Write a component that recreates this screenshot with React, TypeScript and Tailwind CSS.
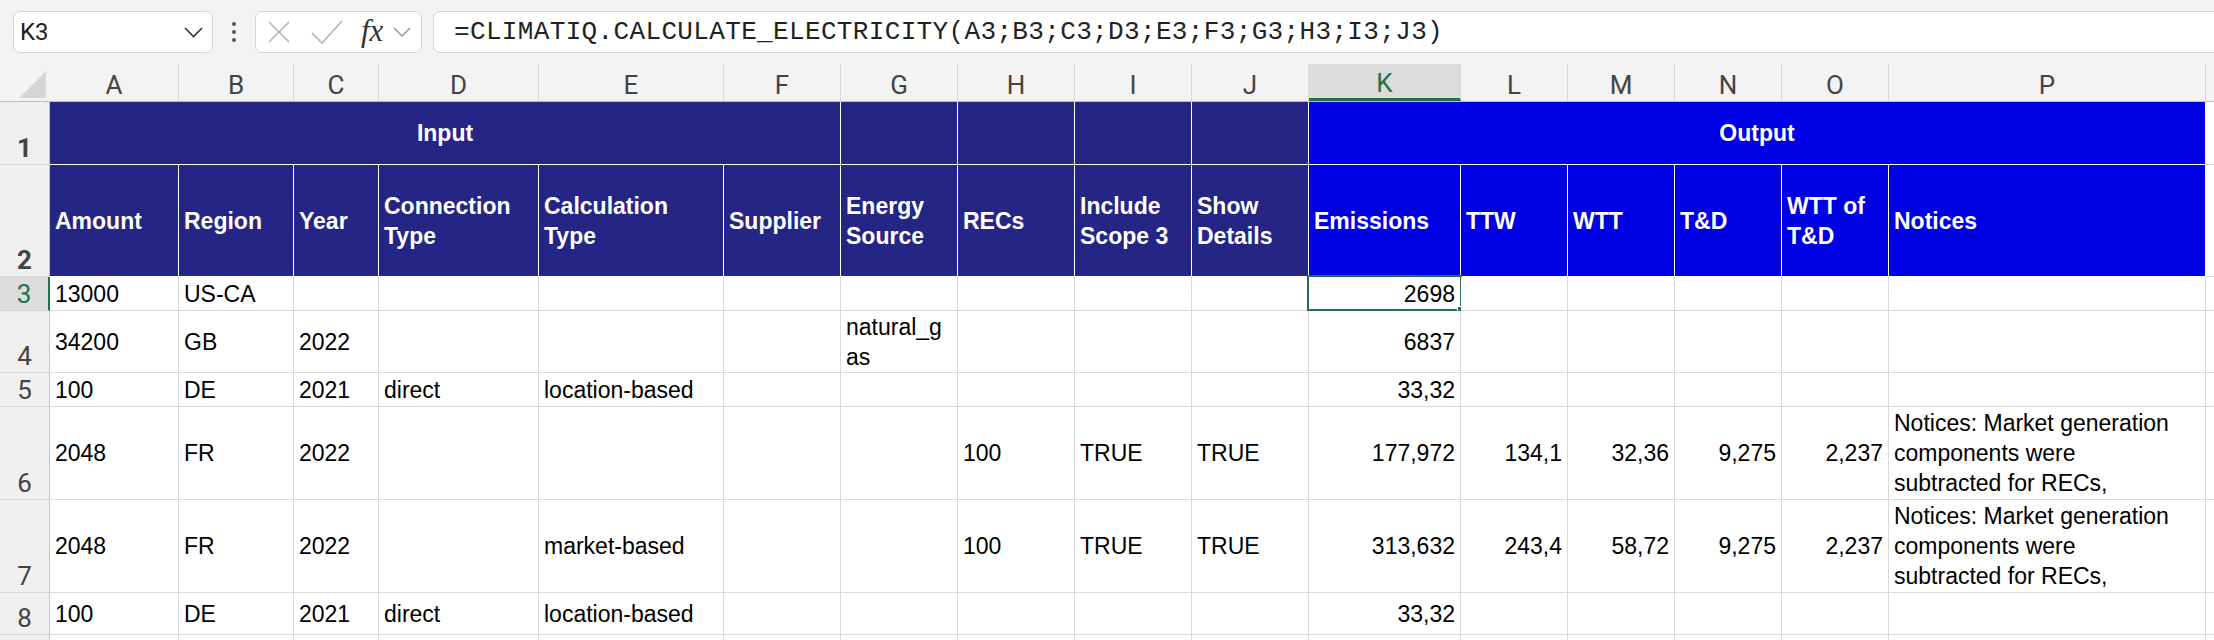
import React from "react";

const columns = [
  { letter: "A", w: "w-[129px]" },
  { letter: "B", w: "w-[115px]" },
  { letter: "C", w: "w-[85px]" },
  { letter: "D", w: "w-[160px]" },
  { letter: "E", w: "w-[185px]" },
  { letter: "F", w: "w-[117px]" },
  { letter: "G", w: "w-[117px]" },
  { letter: "H", w: "w-[117px]" },
  { letter: "I", w: "w-[117px]" },
  { letter: "J", w: "w-[117px]" },
  { letter: "K", w: "w-[152px]" },
  { letter: "L", w: "w-[107px]" },
  { letter: "M", w: "w-[107px]" },
  { letter: "N", w: "w-[107px]" },
  { letter: "O", w: "w-[107px]" },
  { letter: "P", w: "w-[317px]" },
];

const headers: string[][] = [
  ["Amount"],
  ["Region"],
  ["Year"],
  ["Connection", "Type"],
  ["Calculation", "Type"],
  ["Supplier"],
  ["Energy", "Source"],
  ["RECs"],
  ["Include", "Scope 3"],
  ["Show", "Details"],
  ["Emissions"],
  ["TTW"],
  ["WTT"],
  ["T&D"],
  ["WTT of", "T&D"],
  ["Notices"],
];

const notice = ["Notices: Market generation", "components were", "subtracted for RECs,"];

type Cell = string | string[] | null;

const rows: { n: number; h: string; cells: Cell[] }[] = [
  { n: 3, h: "h-[34px]", cells: ["13000", "US-CA", null, null, null, null, null, null, null, null, "2698", null, null, null, null, null] },
  { n: 4, h: "h-[62px]", cells: ["34200", "GB", "2022", null, null, null, ["natural_g", "as"], null, null, null, "6837", null, null, null, null, null] },
  { n: 5, h: "h-[34px]", cells: ["100", "DE", "2021", "direct", "location-based", null, null, null, null, null, "33,32", null, null, null, null, null] },
  { n: 6, h: "h-[93px]", cells: ["2048", "FR", "2022", null, null, null, null, "100", "TRUE", "TRUE", "177,972", "134,1", "32,36", "9,275", "2,237", notice] },
  { n: 7, h: "h-[93px]", cells: ["2048", "FR", "2022", null, "market-based", null, null, "100", "TRUE", "TRUE", "313,632", "243,4", "58,72", "9,275", "2,237", notice] },
  { n: 8, h: "h-[42px]", cells: ["100", "DE", "2021", "direct", "location-based", null, null, null, null, null, "33,32", null, null, null, null, null] },
  { n: 9, h: "h-[40px]", cells: [null, null, null, null, null, null, null, null, null, null, null, null, null, null, null, null] },
];

const RowHead = ({ n, active, hideLabel }: { n: number; active?: boolean; hideLabel?: boolean }) => (
  <div
    className={`w-[50px] h-full shrink-0 flex items-end justify-center pb-[3px] border-b border-[#d6d6d6] font-['Roboto'] text-[26px] leading-none ${
      active
        ? "bg-[#dcdcdc] text-[#217346] border-r-2 border-r-[#217346]"
        : "bg-[#f0f0f0] text-[#444] border-r border-r-[#c4c4c4]"
    }`}
  >
    {hideLabel ? null : n}
  </div>
);

const Lines = ({ value }: { value: Cell }) => {
  if (value === null) return null;
  const lines = Array.isArray(value) ? value : [value];
  return (
    <div>
      {lines.map((l) => (
        <div key={l} className="whitespace-nowrap">
          {l}
        </div>
      ))}
    </div>
  );
};

export default function App() {
  return (
    <div className="w-[2214px] h-[640px] overflow-hidden bg-[#f3f3f3] font-['Liberation_Sans',Arial,sans-serif]">
      {/* Formula bar */}
      <div className="h-[64px] flex items-start pt-[11px]">
        <div className="ml-[13px] w-[200px] h-[42px] shrink-0 bg-white border border-[#d4d4d4] rounded-[7px] flex items-center justify-between pl-[6px] pr-[9px]">
          <span className="font-['Roboto'] text-[24px] text-[#222]">K3</span>
          <svg width="19" height="11" viewBox="0 0 19 11">
            <polyline points="1,1 9.5,9.5 18,1" fill="none" stroke="#333" strokeWidth="1.6" />
          </svg>
        </div>
        <div className="w-[42px] h-[42px] shrink-0 flex items-center justify-center">
          <svg width="6" height="22" viewBox="0 0 6 22">
            <circle cx="3" cy="3" r="2" fill="#555" />
            <circle cx="3" cy="11" r="2" fill="#555" />
            <circle cx="3" cy="19" r="2" fill="#555" />
          </svg>
        </div>
        <div className="w-[167px] h-[42px] shrink-0 bg-white border border-[#d4d4d4] rounded-[7px] flex items-center pl-[11px]">
          <svg width="24" height="24" viewBox="0 0 24 24">
            <line x1="2" y1="2" x2="22" y2="22" stroke="#b3b3b3" strokeWidth="1.6" />
            <line x1="22" y1="2" x2="2" y2="22" stroke="#b3b3b3" strokeWidth="1.6" />
          </svg>
          <svg className="ml-[20px]" width="32" height="24" viewBox="0 0 32 24">
            <polyline points="1,13 11,23 31,1" fill="none" stroke="#b3b3b3" strokeWidth="1.6" />
          </svg>
          <span className="ml-[18px] font-['Liberation_Serif',serif] italic text-[31px] leading-none text-[#333] -mt-[3px]">
            fx
          </span>
          <svg className="ml-[10px]" width="18" height="11" viewBox="0 0 18 11">
            <polyline points="1,1 9,9 17,1" fill="none" stroke="#999" strokeWidth="1.5" />
          </svg>
        </div>
        <div className="ml-[11px] flex-1 -mr-[10px] h-[42px] bg-white border border-[#d4d4d4] rounded-[7px] flex items-center pl-[20px]">
          <span className="font-['Liberation_Mono',monospace] text-[26px] tracking-[0.35px] text-[#222] whitespace-nowrap">
            =CLIMATIQ.CALCULATE_ELECTRICITY(A3;B3;C3;D3;E3;F3;G3;H3;I3;J3)
          </span>
        </div>
      </div>

      {/* Column headers */}
      <div className="h-[38px] flex border-b border-[#bdbdbd] font-['Roboto'] text-[26px] leading-none">
        <div className="w-[50px] h-full shrink-0 flex items-end justify-end pr-[3px] pb-[3px]">
          <svg width="28" height="27" viewBox="0 0 28 27">
            <polygon points="27,0 27,27 0,27" fill="#d6d6d6" />
          </svg>
        </div>
        {columns.map((c) => (
          <div
            key={c.letter}
            className={`${c.w} shrink-0 h-full flex items-center justify-center pt-[4px] border-r border-[#dadada] ${
              c.letter === "K" ? "bg-[#dcdcdc] text-[#217346] border-b-[3px] border-b-[#217346]" : "text-[#444]"
            }`}
          >
            {c.letter}
          </div>
        ))}
        <div className="flex-1 h-full" />
      </div>

      {/* Row 1 */}
      <div className="h-[63px] flex font-bold text-[23px] text-white">
        <RowHead n={1} />
        <div className="w-[791px] h-full shrink-0 bg-[#252585] border-r border-b border-white flex items-center justify-center">
          Input
        </div>
        <div className="w-[117px] h-full shrink-0 bg-[#252585] border-r border-b border-white" />
        <div className="w-[117px] h-full shrink-0 bg-[#252585] border-r border-b border-white" />
        <div className="w-[117px] h-full shrink-0 bg-[#252585] border-r border-b border-white" />
        <div className="w-[117px] h-full shrink-0 bg-[#252585] border-r border-b border-white" />
        <div className="w-[897px] h-full shrink-0 bg-[#0000e4] border-r border-b border-white flex items-center justify-center">
          Output
        </div>
        <div className="flex-1 h-full bg-white border-b border-[#dadada]" />
      </div>

      {/* Row 2 */}
      <div className="h-[112px] flex font-bold text-[23px] leading-[30px] text-white">
        <RowHead n={2} />
        {columns.map((c, i) => (
          <div
            key={c.letter}
            className={`${c.w} h-full shrink-0 border-r border-b border-white flex items-center pl-[5px] ${
              i < 10 ? "bg-[#252585]" : "bg-[#0000e4]"
            }`}
          >
            <Lines value={headers[i]} />
          </div>
        ))}
        <div className="flex-1 h-full bg-white border-b border-[#dadada]" />
      </div>

      {/* Data rows */}
      {rows.map((r) => (
        <div key={r.n} className={`${r.h} flex text-[23px] leading-[30px] text-black`}>
          <RowHead n={r.n} active={r.n === 3} hideLabel={r.n === 9} />
          {columns.map((c, i) => {
            const right = i >= 10 && i <= 14;
            return (
              <div
                key={c.letter}
                className={`${c.w} h-full shrink-0 relative bg-white border-r border-b border-[#dadada] flex items-center ${
                  right ? "justify-end pr-[5px]" : "pl-[5px]"
                }`}
              >
                <Lines value={r.cells[i]} />
                {r.n === 3 && c.letter === "K" && (
                  <div className="absolute -left-[2px] -top-[2px] w-[155px] h-[36px] border-2 border-[#217346] pointer-events-none">
                    <div className="absolute -right-[5px] -bottom-[5px] w-[8px] h-[8px] bg-[#217346] border border-white" />
                  </div>
                )}
              </div>
            );
          })}
          <div className="flex-1 h-full bg-white border-b border-[#dadada]" />
        </div>
      ))}
    </div>
  );
}
